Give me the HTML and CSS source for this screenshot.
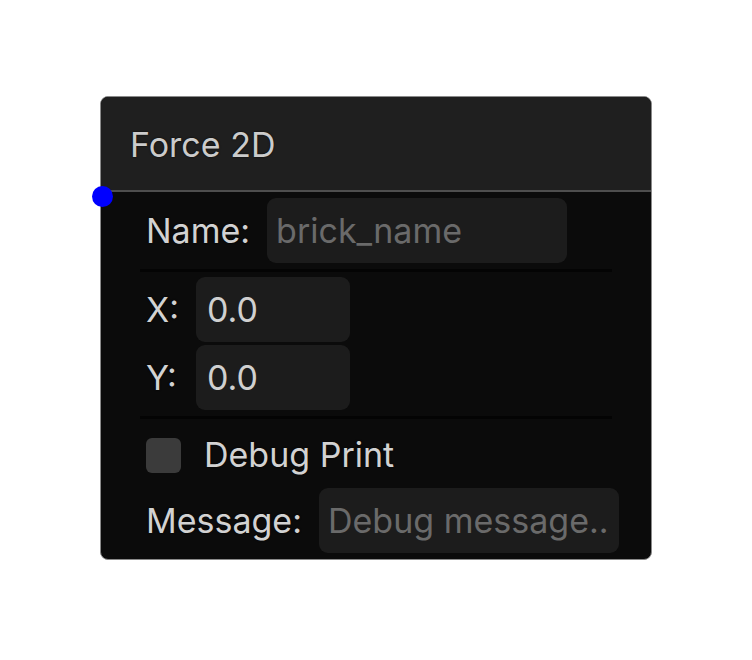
FILE: index.html
```html
<!DOCTYPE html>
<html lang="en">
<head>
<meta charset="utf-8">
<title>Force 2D</title>
<link rel="stylesheet" href="styles.css">
</head>
<body>
<div class="canvas">
  <div class="node">
    <span class="port"></span>
    <div class="node-header">Force 2D</div>
    <div class="node-body">
      <div class="row">
        <span class="label">Name:</span>
        <div class="field field-wide placeholder">brick_name</div>
      </div>
      <div class="sep"></div>
      <div class="row row-tight">
        <span class="label label-axis">X:</span>
        <div class="field field-num">0.0</div>
      </div>
      <div class="row row-tight">
        <span class="label label-axis">Y:</span>
        <div class="field field-num">0.0</div>
      </div>
      <div class="sep"></div>
      <div class="row row-check">
        <span class="checkbox"></span>
        <span class="label">Debug Print</span>
      </div>
      <div class="row">
        <span class="label">Message:</span>
        <div class="field field-wide placeholder">Debug message..</div>
      </div>
    </div>
  </div>
</div>
</body>
</html>
```
FILE: styles.css
```css
* { box-sizing: border-box; }

html, body {
  margin: 0;
  padding: 0;
  background: #ffffff;
}

body {
  font-family: Inter, "Noto Sans", sans-serif;
}

.canvas {
  padding: 96px 0 0 100px;
}

.node {
  position: relative;
  width: 552px;
  height: 464px;
  background: #0b0b0b;
  border: 1px solid #8a8a8a;
  border-radius: 8px;
}

.port {
  position: absolute;
  left: -9px;
  top: 89px;
  width: 21px;
  height: 21px;
  border-radius: 50%;
  background: #0000ff;
  z-index: 2;
}

.node-header {
  height: 95px;
  background: #1f1f1f;
  border-bottom: 2px solid #4e4e4e;
  border-radius: 7px 7px 0 0;
  padding-left: 29px;
  display: flex;
  align-items: center;
  padding-top: 2px;
  font-size: 34px;
  color: #cbcbcb;
  text-shadow: 0 0 2px rgba(0, 0, 0, 0.9);
}

.node-body {
  padding: 6px 39px 0 39px;
  display: flex;
  flex-direction: column;
}

.row {
  display: flex;
  align-items: center;
  padding-left: 6px;
  gap: 17px;
}

.row-tight + .row-tight {
  margin-top: 3px;
}

.label {
  font-size: 34px;
  line-height: 40px;
  color: #d2d2d2;
  text-shadow: 0 0 2px rgba(0, 0, 0, 0.9);
  white-space: nowrap;
}

.label-axis {
  width: 33px;
  flex: none;
}

.field {
  height: 65px;
  background: #1c1c1c;
  border-radius: 9px;
  display: flex;
  align-items: center;
  padding-left: 9px;
  font-size: 34px;
  color: #d0d0d0;
  white-space: nowrap;
  flex: none;
}

.field-wide {
  width: 300px;
}

.field-num {
  width: 154px;
  padding-left: 11px;
}

.placeholder {
  color: #6a6a6a;
}

.sep {
  height: 3px;
  background: #040404;
  margin: 6px 0 5px;
}

.row-check {
  height: 66px;
  gap: 23px;
  margin-bottom: 0;
  margin-top: -2px;
}

.checkbox {
  width: 35px;
  height: 35px;
  border-radius: 6px;
  background: #3b3b3b;
  flex: none;
}
```
